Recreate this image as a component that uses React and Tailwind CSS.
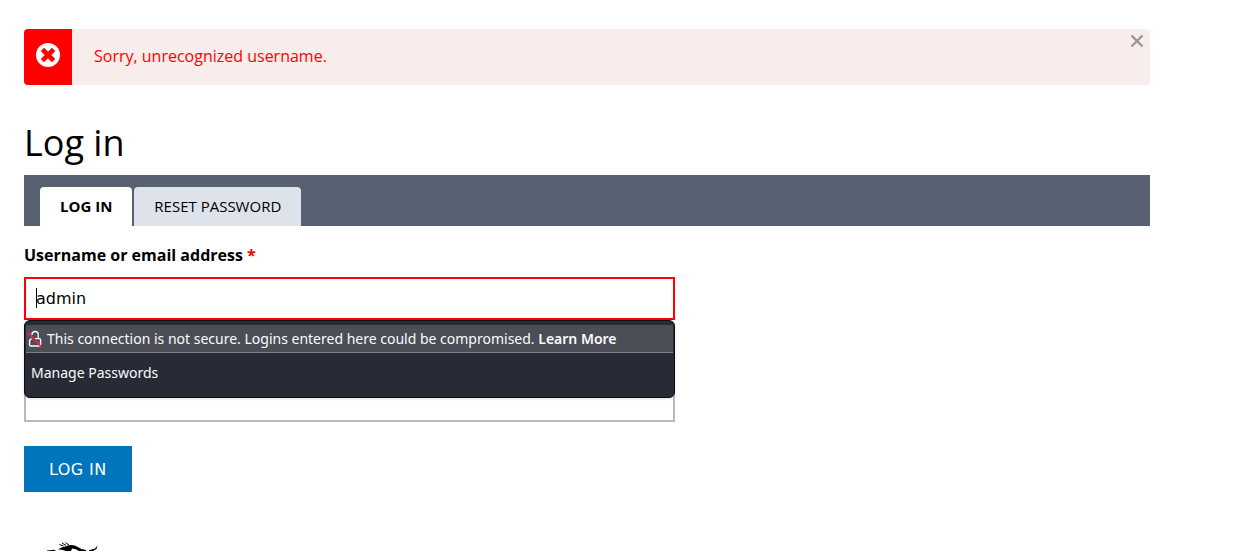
import { useId } from "react";

const TABS = [
  { label: "Log in", href: "#login", active: true },
  { label: "Reset password", href: "#reset", active: false },
];

function ErrorIcon() {
  return (
    <svg viewBox="0 0 24 24" className="size-6" aria-hidden="true">
      <circle cx="12" cy="12" r="12" fill="#fff" />
      <path d="M8 8 16 16M16 8 8 16" stroke="#f00" strokeWidth="4.6" strokeLinecap="square" />
    </svg>
  );
}

function InsecureIcon() {
  return (
    <svg viewBox="0 0 16 18" width="16" height="18" fill="none" className="shrink-0" aria-hidden="true">
      <path d="M5 5V4.6a3.1 3.1 0 0 1 6.2 0v4" stroke="#fbfbfe" strokeWidth="1.3" />
      <path d="M4.5 8.6 2.6 10.4v4.4q0 1.2 1.2 1.2h8.6q1.2 0 1.2-1.2v-5q0-1.2-1.2-1.2H8" stroke="#fbfbfe" strokeWidth="1.4" />
      <path d="M1 2.4 14.3 16.8" stroke="#f0204a" strokeWidth="1.7" />
    </svg>
  );
}

function Alert({ children }) {
  return (
    <div role="alert" className="flex rounded bg-[#f8edeb] text-[#f00] overflow-hidden">
      <div className="flex w-12 items-start justify-center bg-[#f00] pt-3.5">
        <ErrorIcon />
      </div>
      <p className="flex-1 pt-[15px] pb-[17px] pl-[22px] text-base leading-6">{children}</p>
      <button type="button" aria-label="Close" className="mt-[5px] mr-1.5 size-3.5 self-start">
        <svg viewBox="0 0 14 14" className="size-3.5 fill-none stroke-[#999] stroke-[2.4]" aria-hidden="true">
          <path d="m1.5 1.5 11 11m0-11-11 11" />
        </svg>
      </button>
    </div>
  );
}

function Field({ label, labelClass = "", className, children, ...props }) {
  const id = useId();
  return (
    <div className="relative">
      <label htmlFor={id} className={`block text-base leading-6 font-bold ${labelClass}`}>
        {label} <span className="text-[#e00]">*</span>
      </label>
      <input
        id={id}
        aria-label={label}
        className={`mt-2.5 block h-[43px] w-full border-2 bg-white px-2.5 text-base outline-none [font-family:'DejaVu_Sans',sans-serif] ${className}`}
        {...props}
      />
      {children}
    </div>
  );
}

// Autofill suggestions that hang under the username field
function PasswordMenu() {
  return (
    <div className="absolute inset-x-0 top-full z-10 rounded-md border border-[#0c0c10] bg-[#282a36] pt-1 pb-1 text-[#fbfbfe] shadow-sm [font-family:'Noto_Sans',sans-serif] text-sm">
      <div className="mx-px flex h-7 items-center gap-1 border-b border-[#7c7e85] bg-[#4c4e57] pl-px">
        <InsecureIcon />
        <p>
          This connection is not secure. Logins entered here could be compromised. <a href="#more" className="font-semibold">Learn More</a>
        </p>
      </div>
      <button type="button" className="block w-full px-1.5 py-2.5 text-left">Manage Passwords</button>
    </div>
  );
}

export default function App() {
  return (
    <main className="pt-[29px] pr-[89px] pl-6 text-black [font-family:'Open_Sans',sans-serif]">
      <Alert>Sorry, unrecognized username.</Alert>

      <h1 className="mt-8 text-4xl leading-[52px]">Log in</h1>

      <nav className="mt-1.5 flex gap-0.5 bg-[#586172] px-4 pt-3">
        {TABS.map((tab) => (
          <a
            key={tab.label}
            href={tab.href}
            className={`rounded-t px-5 text-[15px] leading-[39px] uppercase ${tab.active ? "bg-white font-bold" : "bg-[#dee2eb]"}`}
          >
            {tab.label}
          </a>
        ))}
      </nav>

      <form className="mt-[17px] max-w-[651px]" onSubmit={(e) => e.preventDefault()}>
        <div className="space-y-[25px]">
          <Field label="Username or email address" type="text" defaultValue="admin" className="border-[#f00]">
            <span className="absolute bottom-3 left-3 h-5 w-px bg-black" />
            <PasswordMenu />
          </Field>
          <Field label="Password" type="password" labelClass="invisible" className="border-[#b8b8b8]" />
        </div>
        <button type="submit" className="mt-6 h-[46px] bg-[#0074bd] px-[25px] pt-px text-base tracking-wide text-white uppercase [font-family:'DejaVu_Sans',sans-serif]">
          Log in
        </button>
      </form>

      <footer className="mt-12 h-[11px] pl-5">
        <svg viewBox="0 0 58 11" width="58" height="11" className="block" aria-hidden="true">
          <path d="M3 10.4 10 9.8 12 11H3Z" />
          <path d="M14 9.5Q17 7 22 6.2 27 4 32 6 36 9 42 10V11H35Q32 8.5 28 8.5L27 11H22Q18 9 14 9.5Z" />
          <path d="M19.5 6 15.5 4.5M22 5.5 18 3M25 5 21.5 2.5" fill="none" stroke="#000" strokeWidth="1" />
          <path d="M45 10.2 51 8.6 53.5 5.5 52.5 9 49 11H45Z" />
        </svg>
      </footer>
    </main>
  );
}
